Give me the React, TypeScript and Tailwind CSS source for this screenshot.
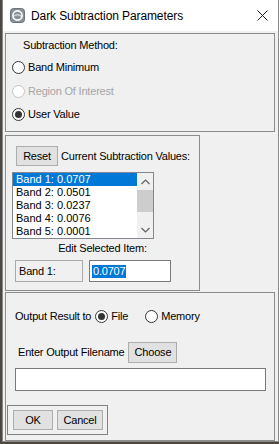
import React from "react";

function Radio({ checked, disabled }: { checked?: boolean; disabled?: boolean }) {
  return (
    <span
      className={`w-[13px] h-[13px] rounded-full border bg-white flex items-center justify-center shrink-0 ${
        disabled ? "border-[#c4c4c4]" : "border-[#333333]"
      }`}
    >
      {checked && <span className="w-[7px] h-[7px] rounded-full bg-[#333333]" />}
    </span>
  );
}

function Btn({ label, w }: { label: string; w: string }) {
  return (
    <div className={`${w} h-[20px] bg-[#e1e1e1] border border-[#adadad] flex items-center justify-center shrink-0`}>
      {label}
    </div>
  );
}

const bands = ["Band 1: 0.0707", "Band 2: 0.0501", "Band 3: 0.0237", "Band 4: 0.0076", "Band 5: 0.0001"];

export default function App() {
  return (
    <div
      className="w-[279px] h-[444px] bg-[#4d4741] flex text-[11px] leading-[13px] tracking-[-0.2px] text-black"
      style={{ fontFamily: '"Liberation Sans", Arial, sans-serif' }}
    >
      <div className="ml-[2px] w-[277px] h-[442px] bg-[#f0f0f0] border-x border-b border-[#8a8a8a] flex flex-col">
        {/* Title bar */}
        <div className="h-[31px] bg-white flex items-center shrink-0">
          <svg width="15" height="15" viewBox="0 0 15 15" className="ml-[7px] mt-[-1px]">
            <rect x="0.5" y="0.5" width="14" height="14" rx="3" fill="#8b9198" stroke="#6c727a" />
            <circle cx="7.5" cy="7.5" r="4.6" fill="none" stroke="#ffffff" strokeWidth="1.6" />
            <path d="M3.5 8.5 Q7.5 5 11.5 8.5" fill="none" stroke="#ffffff" strokeWidth="1" />
          </svg>
          <span className="ml-[6px] text-[12px] leading-[16px] tracking-[-0.1px] text-black">
            Dark Subtraction Parameters
          </span>
          <svg width="11" height="11" viewBox="0 0 11 11" className="ml-auto mr-[10px]">
            <path d="M0.5 0.5 L10.5 10.5 M10.5 0.5 L0.5 10.5" stroke="#1b1b1b" strokeWidth="1" />
          </svg>
        </div>

        {/* Body */}
        <div className="flex-1 flex flex-col pl-[2px] pr-[3px] pt-[2px]">
          {/* Panel 1 */}
          <div className="h-[99px] border border-[#8c8c8c] flex flex-col shrink-0">
            <div className="h-[13px] mt-[5px] pl-[17px] flex items-center">Subtraction Method:</div>
            <div className="h-[13px] mt-[9px] pl-[6px] flex items-center gap-[3px]">
              <Radio />
              <span>Band Minimum</span>
            </div>
            <div className="h-[13px] mt-[11px] pl-[6px] flex items-center gap-[3px] text-[#a6a6a6]">
              <Radio disabled />
              <span>Region Of Interest</span>
            </div>
            <div className="h-[13px] mt-[10px] pl-[6px] flex items-center gap-[3px]">
              <Radio checked />
              <span>User Value</span>
            </div>
          </div>

          {/* Panel 2 */}
          <div className="mt-[3px] w-[195px] h-[156px] border border-[#8c8c8c] flex flex-col shrink-0">
            <div className="mt-[10px] ml-[10px] flex items-center gap-[3px]">
              <Btn label="Reset" w="w-[42px]" />
              <span>Current Subtraction Values:</span>
            </div>
            <div className="mt-[6px] ml-[6px] w-[142px] h-[67px] bg-white border border-[#828790] flex shrink-0 tracking-normal">
              <div className="flex-1 flex flex-col">
                {bands.map((b, i) => (
                  <div
                    key={b}
                    className={`h-[13px] pl-[3px] flex items-center ${i === 0 ? "bg-[#0078d7] text-white" : ""}`}
                  >
                    {b}
                  </div>
                ))}
              </div>
              <div className="w-[16px] flex flex-col bg-[#f0f0f0]">
                <div className="h-[17px] flex items-center justify-center">
                  <svg width="9" height="6" viewBox="0 0 9 6">
                    <path d="M0.5 5 L4.5 1 L8.5 5" fill="none" stroke="#606060" strokeWidth="1.2" />
                  </svg>
                </div>
                <div className="h-[22px] bg-[#cdcdcd]" />
                <div className="flex-1" />
                <div className="h-[17px] flex items-center justify-center">
                  <svg width="9" height="6" viewBox="0 0 9 6">
                    <path d="M0.5 1 L4.5 5 L8.5 1" fill="none" stroke="#606060" strokeWidth="1.2" />
                  </svg>
                </div>
              </div>
            </div>
            <div className="mt-[3px] h-[13px] flex items-center justify-center">Edit Selected Item:</div>
            <div className="mt-[5px] ml-[9px] flex gap-[6px]">
              <div className="w-[68px] h-[22px] border border-[#a9a9a9] bg-[#f0f0f0] flex items-center pl-[3px]">
                Band 1:
              </div>
              <div className="w-[82px] h-[22px] border border-[#7a7a7a] bg-white flex items-center pl-[2px]">
                <span className="bg-[#0078d7] text-white px-[1px]">0.0707</span>
              </div>
            </div>
          </div>

          {/* Panel 3 */}
          <div className="mt-[1px] h-[149px] border border-[#8c8c8c] flex flex-col shrink-0">
            <div className="mt-[17px] ml-[9px] h-[13px] flex items-center">
              <span>Output Result to</span>
              <span className="ml-[4px]"><Radio checked /></span>
              <span className="ml-[3px]">File</span>
              <span className="ml-[17px]"><Radio /></span>
              <span className="ml-[3px]">Memory</span>
            </div>
            <div className="mt-[19px] ml-[12px] flex items-center gap-[4px]">
              <span>Enter Output Filename</span>
              <div className="w-[49px] h-[21px] bg-[#e1e1e1] border border-[#adadad] flex items-center justify-center">
                Choose
              </div>
            </div>
            <div className="mt-[5px] ml-[9px] w-[251px] h-[23px] bg-white border border-[#7a7a7a] shrink-0" />
            <div className="mt-[14px] ml-[1px] w-[101px] h-[30px] border border-[#808080] flex items-center pl-[5px] gap-[4px]">
              <Btn label="OK" w="w-[40px]" />
              <Btn label="Cancel" w="w-[46px]" />
            </div>
          </div>
        </div>
      </div>
    </div>
  );
}
